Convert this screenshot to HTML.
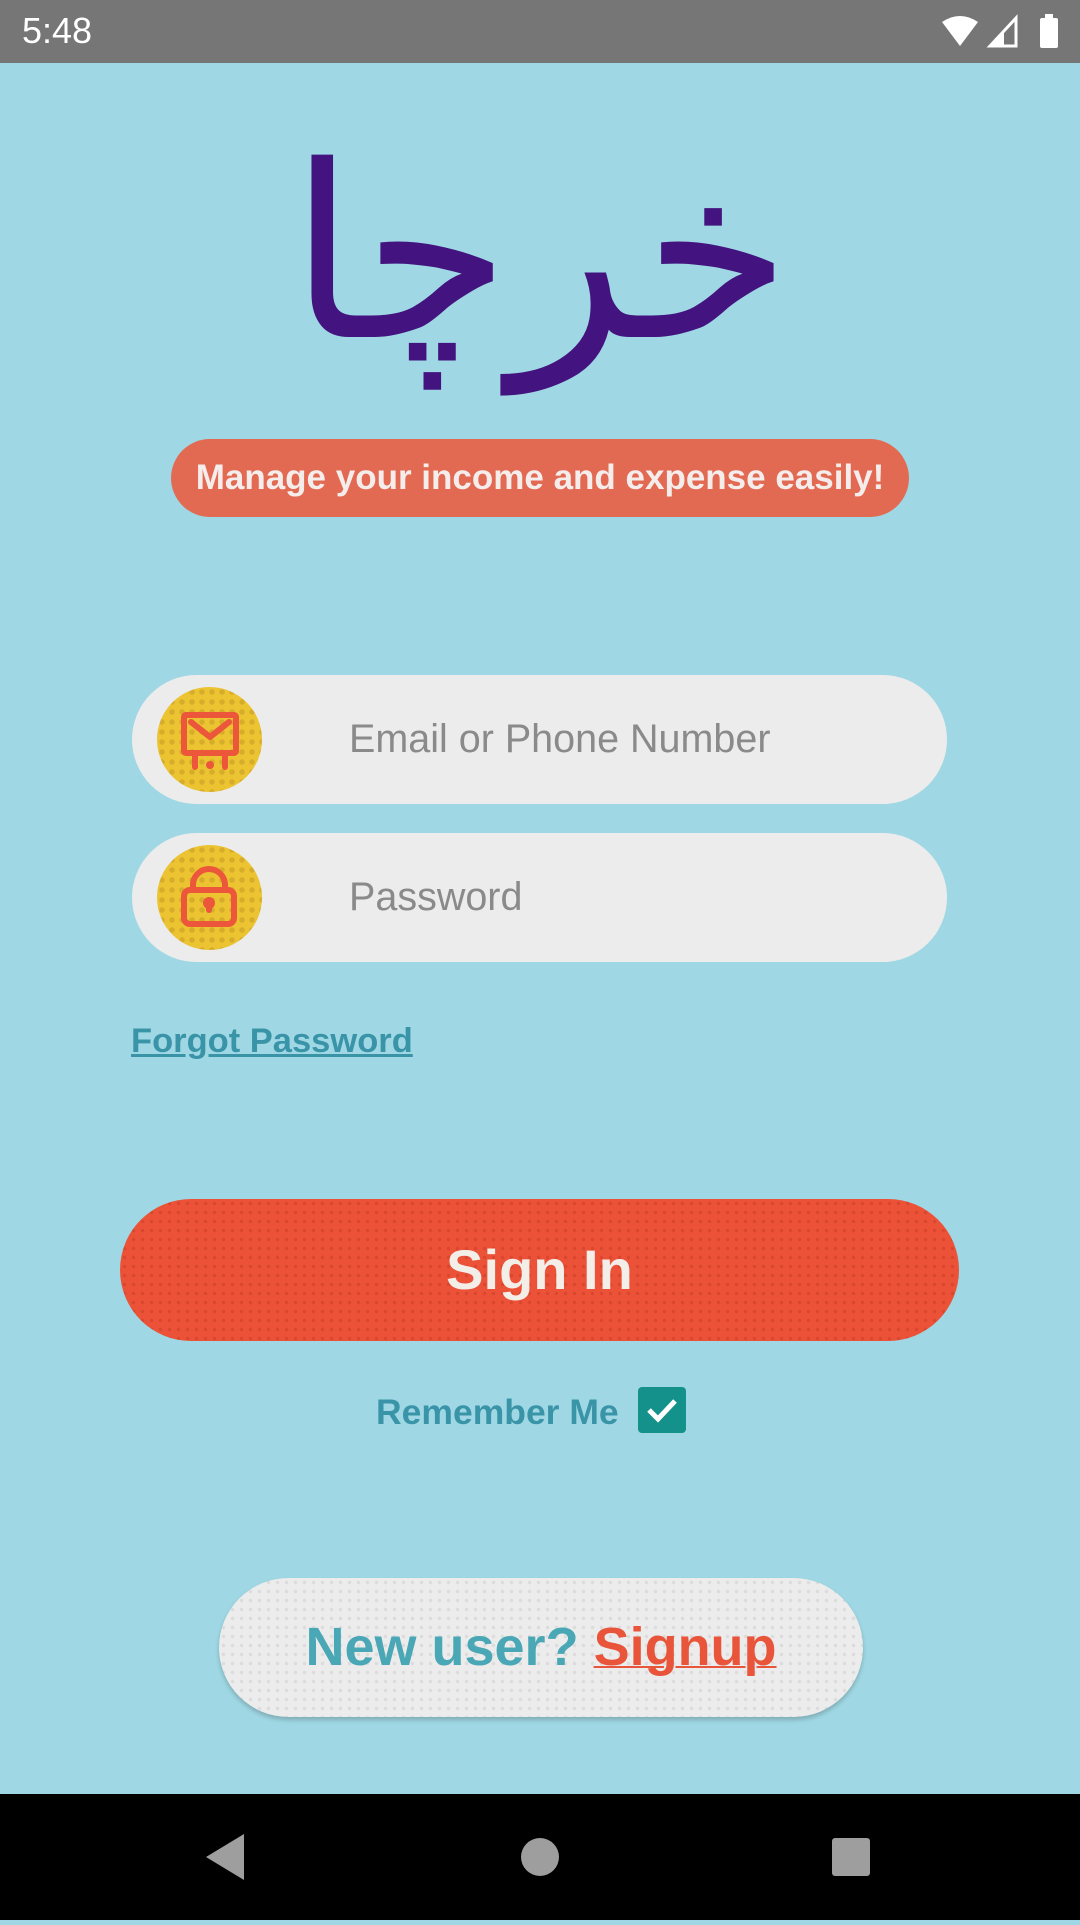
<!DOCTYPE html>
<html><head><meta charset="utf-8"><style>
*{margin:0;padding:0;box-sizing:border-box}
body{width:1080px;height:1920px;background:#9fd8e4;position:relative;overflow:hidden;font-family:"Liberation Sans",sans-serif}
.abs{position:absolute}
.status{left:0;top:0;width:1080px;height:63px;background:#767676}
.field{left:132px;width:815px;height:129px;background:#ececec;border-radius:65px}
.ic{left:25px;top:12px;width:105px;height:105px;border-radius:50%;background:#ecc431;background-image:radial-gradient(circle,#d6ad2a 2.5px,transparent 3px);background-size:10px 10px}
.ph{left:217px;top:0;line-height:129px;font-size:39.5px;color:#8a8a8a}
</style></head><body>
<div class="abs status">
<div class="abs" style="left:22px;top:10px;font-size:36px;color:#fff">5:48</div>
<svg class="abs" style="left:940px;top:14px" width="130" height="36" viewBox="0 0 130 36">
<path d="M2 8 Q20 -4 38 8 L20 32 Z" fill="#fff"/>
<path d="M50 32 L76 4 L76 32 Z" fill="none" stroke="#fff" stroke-width="3"/><path d="M50 32 L64 18 L64 32Z" fill="#fff"/>
<rect x="100" y="4" width="18" height="30" rx="2" fill="#fff"/><rect x="105" y="0" width="8" height="5" fill="#fff"/>
</svg>
</div>
<div class="abs" style="left:0;top:104px;width:1080px;text-align:center;font-family:'DejaVu Sans',sans-serif;font-size:240px;color:#43137f;line-height:300px" dir="rtl">خرچا</div>
<div class="abs" style="left:171px;top:439px;width:738px;height:78px;background:#e36a52;border-radius:39px;color:#f5ecec;font-weight:bold;font-size:35px;text-align:center;line-height:78px">Manage your income and expense easily!</div>

<div class="abs field" style="top:675px"><div class="abs ic"><svg width="105" height="105" viewBox="0 0 105 105"><g fill="none" stroke="#ec563a" stroke-width="6" stroke-linecap="round" stroke-linejoin="round"><rect x="27" y="28" width="52" height="38" rx="2"/><path d="M34 35 L53 50 L72 35"/><path d="M38 68 V80 M68 68 V80"/></g><circle cx="53" cy="78" r="4" fill="#ec563a"/></svg></div><div class="abs ph">Email or Phone Number</div></div>
<div class="abs field" style="top:833px"><div class="abs ic"><svg width="105" height="105" viewBox="0 0 105 105"><g fill="none" stroke="#ec563a" stroke-width="6" stroke-linejoin="round"><rect x="27" y="45" width="50" height="34" rx="6"/><path d="M36 45 V40 a16 16 0 0 1 32 0 V45"/></g><circle cx="52" cy="58" r="6" fill="#ec563a"/><rect x="49" y="58" width="6" height="10" rx="3" fill="#ec563a"/></svg></div><div class="abs ph">Password</div></div>

<div class="abs" style="left:131px;top:1022px;font-size:34.5px;font-weight:bold;color:#3a94a8;text-decoration:underline">Forgot Password</div>

<div class="abs" style="left:120px;top:1199px;width:839px;height:142px;border-radius:71px;background:#ec5238;background-image:radial-gradient(circle,#d9472f 1.5px,transparent 2px);background-size:9px 9px;color:#f3eee8;font-weight:bold;font-size:56px;text-align:center;line-height:142px">Sign In</div>

<div class="abs" style="left:376px;top:1392px;font-size:35.5px;font-weight:bold;color:#3a94a8">Remember Me</div>
<svg class="abs" style="left:638px;top:1387px" width="48" height="46" viewBox="0 0 48 46"><rect width="48" height="46" rx="4" fill="#13918a"/><path d="M11 23 L20 32 L37 14" fill="none" stroke="#fff" stroke-width="5"/></svg>

<div class="abs" style="left:219px;top:1578px;width:644px;height:139px;border-radius:70px;background:#ececec;background-image:radial-gradient(circle,#dcdcdc 1.5px,transparent 2px);background-size:9px 9px;box-shadow:0 3px 5px rgba(0,0,0,0.2);text-align:center;line-height:139px;font-size:54px;font-weight:bold;color:#4aa7b5">New user? <span style="color:#e8553a;text-decoration:underline;text-decoration-thickness:2px">Signup</span></div>

<div class="abs" style="left:0;top:1794px;width:1080px;height:126px;background:#000">
<svg width="1080" height="126"><path d="M244 40 V86 L206 63Z" fill="#9e9e9e"/><circle cx="540" cy="63" r="19" fill="#9e9e9e"/><rect x="832" y="44" width="38" height="38" rx="3" fill="#9e9e9e"/></svg>
</div>
</body></html>
